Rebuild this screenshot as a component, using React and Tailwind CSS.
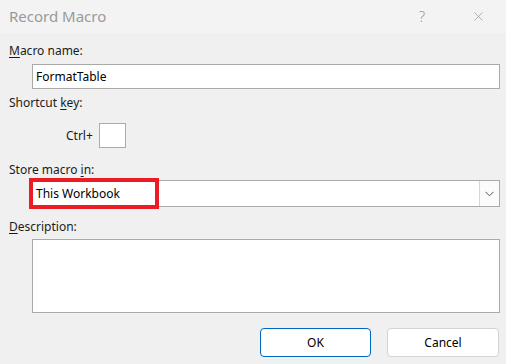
import { X } from 'lucide-react';

const font = { fontFamily: '"Noto Sans", "Open Sans", sans-serif' };

function Label({ pre, u, post, className = '' }) {
  return (
    <div className={`ml-[9px] h-[16px] leading-[16px] text-[12px] text-[#1b1b1b] ${className}`}>
      {pre}
      <span className="underline underline-offset-2 decoration-1">{u}</span>
      {post}
    </div>
  );
}

export default function App() {
  return (
    <div className="w-[506px] h-[364px] bg-[#f0f0f0] overflow-hidden" style={font}>
      {/* Title bar */}
      <div className="h-[33px] bg-[#f3f3f3] flex items-center">
        <span className="ml-[9px] text-[15px] text-[#9a9a9a]">Record Macro</span>
        <span className="ml-auto mr-[46px] text-[15px] text-[#9a9a9a] font-light">?</span>
        <X className="mr-[20px] w-[15px] h-[15px] text-[#8a8a8a]" strokeWidth={1} />
      </div>

      <Label className="mt-[10px]" u="M" post="acro name:" />
      <div className="ml-[32px] mt-[5px] w-[468px] h-[25px] border border-[#a9a9a9] bg-white flex items-center pl-[3px] text-[12px] text-black">
        FormatTable
      </div>

      <Label className="mt-[6px]" pre="Shortcut " u="k" post="ey:" />
      <div className="mt-[12px] flex items-center h-[25px]">
        <span className="ml-[66px] text-[12px] text-[#1b1b1b]">Ctrl+</span>
        <div className="ml-[6px] w-[27px] h-[25px] border border-[#ababab] bg-white" />
      </div>

      <Label className="mt-[14px]" pre="Store macro " u="i" post="n:" />
      <div className="relative ml-[32px] mt-[2px] w-[468px] h-[27px] border border-[#aaaaaa] bg-white flex items-center">
        <span className="pl-[3px] text-[12px] text-black">This Workbook</span>
        <div className="ml-auto mr-0 w-[20px] h-[25px] bg-[#fbfbfb] border-l border-[#d6d6d6] flex items-center justify-center">
          <svg width="9" height="6" viewBox="0 0 9 6">
            <polyline points="0.5,0.8 4.5,4.8 8.5,0.8" fill="none" stroke="#555" strokeWidth="1" />
          </svg>
        </div>
        <div className="absolute left-[-4px] top-[-3px] w-[130px] h-[31px] border-[4px] border-[#ed1c24]" />
      </div>

      <Label className="mt-[12px]" u="D" post="escription:" />
      <div className="ml-[32px] mt-[4px] w-[468px] h-[74px] border border-[#a9a9a9] bg-white" />

      <div className="mt-[15px] flex">
        <button className="ml-[260px] w-[111px] h-[29px] rounded-[4px] border border-[#0067c0] bg-white text-[12px] text-black">
          OK
        </button>
        <button className="ml-[16px] w-[112px] h-[29px] rounded-[4px] border border-[#d3d3d3] bg-white text-[12px] text-black">
          Cancel
        </button>
      </div>
    </div>
  );
}
